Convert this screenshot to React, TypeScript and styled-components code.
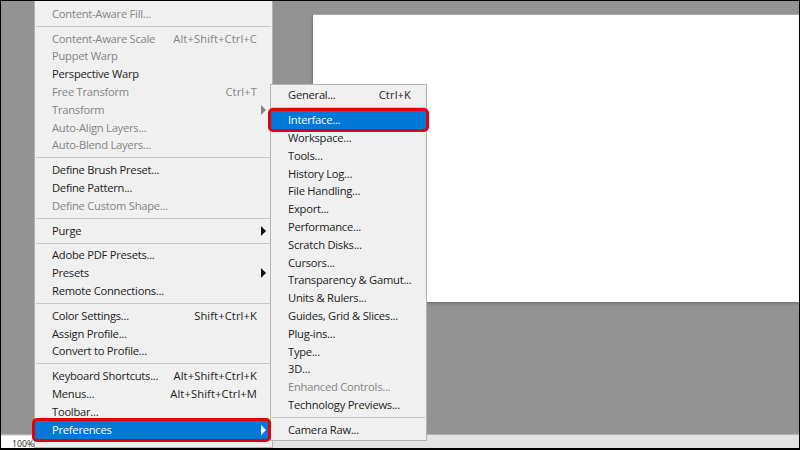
import styled, { createGlobalStyle } from 'styled-components';

const GlobalStyle = createGlobalStyle`
  html, body {
    margin: 0;
    padding: 0;
    background: #000;
  }
`;

const Frame = styled.div`
  position: relative;
  box-sizing: border-box;
  width: 800px;
  height: 450px;
  padding: 1px 1px 2px 1px;
  overflow: hidden;
  background: #000;
  font-family: 'Open Sans', 'Liberation Sans', sans-serif;
  font-size: 11.2px;
  letter-spacing: -0.25px;
`;

const Workspace = styled.div`
  display: flex;
  flex-direction: column;
  height: 100%;
  background: #939393;
`;

const Pasteboard = styled.div`
  flex: 1;
  padding: 14px 0 0 312px;
`;

const Canvas = styled.div`
  height: 287px;
  background: #fff;
  box-shadow: 0 1px 3px rgba(0, 0, 0, 0.35), 0 -1px 0 #b4b4b4;
`;

const StatusBar = styled.div`
  display: flex;
  height: 13px;
  background: #e3e3e3;
  border-top: 1px solid #b0b0b0;
`;

const Zoom = styled.div`
  width: 33px;
  margin-top: 1px;
  padding-left: 11px;
  box-sizing: border-box;
  background: #fff;
  color: #222;
  font-size: 8.7px;
  letter-spacing: 0;
  line-height: 16px;
  white-space: nowrap;
`;

interface IMenu {
  left: number;
  top: number;
  width: number;
  bottom: number;
}

const Menu = styled.div<IMenu>`
  position: absolute;
  box-sizing: border-box;
  left: ${(props) => props.left}px;
  top: ${(props) => props.top}px;
  width: ${(props) => props.width}px;
  height: ${(props) => props.bottom - props.top}px;
  padding-top: 1.5px;
  background: #f0f0f0;
  border: 1px solid #b4b4b4;
`;

const MainMenu = styled(Menu)`
  padding-top: 4px;
  border-top: none;
`;

interface IRow {
  disabled?: boolean;
  active?: boolean;
  indent: number;
  endGap?: number;
}

const Row = styled.div<IRow>`
  position: relative;
  display: flex;
  align-items: center;
  justify-content: space-between;
  box-sizing: border-box;
  height: 17.8px;
  margin-right: ${(props) => props.endGap ?? 0}px;
  padding: 0 15px 1px ${(props) => props.indent}px;
  white-space: nowrap;
  background: ${(props) => (props.active ? '#0078d7' : 'transparent')};
  color: ${(props) =>
    props.active ? '#fff' : props.disabled ? '#858585' : '#1c1c1c'};
`;

const Shortcut = styled.span`
  letter-spacing: 0.1px;
`;

// sits above the submenu that opens next to the row
const Highlight = styled.div`
  position: absolute;
  z-index: 2;
  inset: -3px;
  border: 3px solid #e0010f;
  border-radius: 5px;
`;

const Separator = styled.div`
  height: 7px;
  display: flex;
  align-items: center;
  padding: 0 1px;
  &::after {
    content: '';
    flex: 1;
    height: 1px;
    background: #c8c8c8;
  }
`;

interface IArrow {
  color: string;
  end: number;
}

const Arrow = styled.span<IArrow>`
  position: absolute;
  right: ${(props) => props.end}px;
  top: 4px;
  width: 0;
  height: 0;
  border-left: 5px solid ${(props) => props.color};
  border-top: 5px solid transparent;
  border-bottom: 5px solid transparent;
`;

type Item = {
  label?: string;
  shortcut?: string;
  disabled?: boolean;
  submenu?: boolean;
  active?: boolean;
};

const mainItems: Item[] = [
  { label: 'Content-Aware Fill...', disabled: true },
  {},
  { label: 'Content-Aware Scale', shortcut: 'Alt+Shift+Ctrl+C', disabled: true },
  { label: 'Puppet Warp', disabled: true },
  { label: 'Perspective Warp' },
  { label: 'Free Transform', shortcut: 'Ctrl+T', disabled: true },
  { label: 'Transform', disabled: true, submenu: true },
  { label: 'Auto-Align Layers...', disabled: true },
  { label: 'Auto-Blend Layers...', disabled: true },
  {},
  { label: 'Define Brush Preset...' },
  { label: 'Define Pattern...' },
  { label: 'Define Custom Shape...', disabled: true },
  {},
  { label: 'Purge', submenu: true },
  {},
  { label: 'Adobe PDF Presets...' },
  { label: 'Presets', submenu: true },
  { label: 'Remote Connections...' },
  {},
  { label: 'Color Settings...', shortcut: 'Shift+Ctrl+K' },
  { label: 'Assign Profile...' },
  { label: 'Convert to Profile...' },
  {},
  { label: 'Keyboard Shortcuts...', shortcut: 'Alt+Shift+Ctrl+K' },
  { label: 'Menus...', shortcut: 'Alt+Shift+Ctrl+M' },
  { label: 'Toolbar...' },
  { label: 'Preferences', submenu: true, active: true },
];

const subItems: Item[] = [
  { label: 'General...', shortcut: 'Ctrl+K' },
  {},
  { label: 'Interface...', active: true },
  { label: 'Workspace...' },
  { label: 'Tools...' },
  { label: 'History Log...' },
  { label: 'File Handling...' },
  { label: 'Export...' },
  { label: 'Performance...' },
  { label: 'Scratch Disks...' },
  { label: 'Cursors...' },
  { label: 'Transparency & Gamut...' },
  { label: 'Units & Rulers...' },
  { label: 'Guides, Grid & Slices...' },
  { label: 'Plug-ins...' },
  { label: 'Type...' },
  { label: '3D...' },
  { label: 'Enhanced Controls...', disabled: true },
  { label: 'Technology Previews...' },
  {},
  { label: 'Camera Raw...' },
];

const renderItems = (items: Item[]) =>
  items.map((item, i) =>
    item.label ? (
      <Row
        key={item.label}
        indent={17}
        disabled={item.disabled}
        active={item.active}
        endGap={item.submenu && item.active ? 4 : 0}
      >
        <span>{item.label}</span>
        {item.shortcut && <Shortcut>{item.shortcut}</Shortcut>}
        {item.submenu && (
          <Arrow
            end={item.active ? 2 : 6}
            color={item.active ? '#fff' : item.disabled ? '#858585' : '#111'}
          />
        )}
        {item.active && <Highlight />}
      </Row>
    ) : (
      <Separator key={i} />
    ),
  );

export default function App() {
  return (
    <Frame>
      <GlobalStyle />
      <Workspace>
        <Pasteboard>
          <Canvas />
        </Pasteboard>
        <StatusBar>
          <Zoom>100%</Zoom>
        </StatusBar>
      </Workspace>
      <MainMenu left={34} top={1} width={239} bottom={448}>
        {renderItems(mainItems)}
      </MainMenu>
      <Menu left={270} top={84} width={157} bottom={441}>
        {renderItems(subItems)}
      </Menu>
    </Frame>
  );
}
